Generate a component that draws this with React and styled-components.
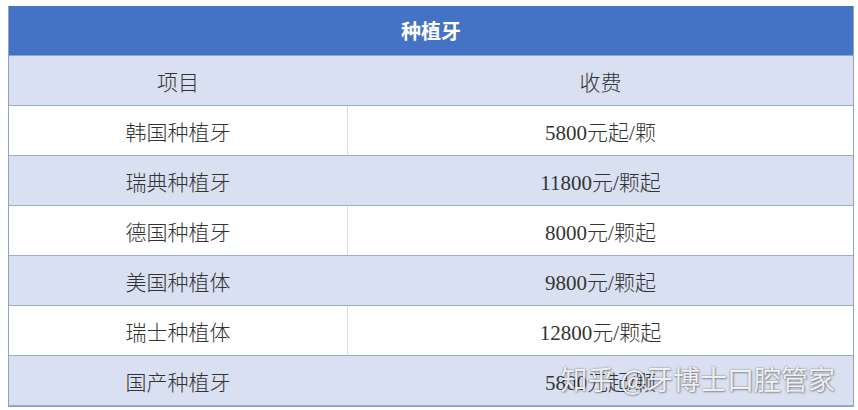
import React from "react";
import styled, { createGlobalStyle } from "styled-components";

const GlobalStyle = createGlobalStyle`
  html, body {
    margin: 0;
    padding: 0;
    background: #ffffff;
  }
`;

const rows = [
  { name: "韩国种植牙", price: "5800元起/颗" },
  { name: "瑞典种植牙", price: "11800元/颗起" },
  { name: "德国种植牙", price: "8000元/颗起" },
  { name: "美国种植体", price: "9800元/颗起" },
  { name: "瑞士种植体", price: "12800元/颗起" },
  { name: "国产种植牙", price: "5800元起/颗" },
];

const App = () => {
  return (
    <Page>
      <GlobalStyle />
      <Table>
        <Title>种植牙</Title>
        <Row $shade>
          <Cell $left $shade>项目</Cell>
          <Cell $shade>收费</Cell>
        </Row>
        {rows.map((r, i) => (
          <Row key={r.name} $shade={i % 2 === 1}>
            <Cell $left $shade={i % 2 === 1}>{r.name}</Cell>
            <Cell $shade={i % 2 === 1}>{r.price}</Cell>
          </Row>
        ))}
        <Watermark>知乎 @牙博士口腔管家</Watermark>
      </Table>
    </Page>
  );
};

export default App;

const Page = styled.div`
  width: 858px;
  height: 410px;
  padding: 6px 0 0 8px;
  box-sizing: border-box;
`;

const Table = styled.div`
  position: relative;
  width: 846px;
  border: 1px solid #8fa2c9;
  border-top: none;
  box-sizing: border-box;
  font-family: "Liberation Serif", "Noto Sans CJK SC", serif;
`;

const Title = styled.div`
  height: 50px;
  background: #4472c4;
  color: #ffffff;
  font-weight: bold;
  font-size: 20px;
  display: flex;
  align-items: center;
  justify-content: center;
  border-bottom: 1px solid #8ea5d4;
  box-sizing: border-box;
`;

const Row = styled.div`
  display: grid;
  grid-template-columns: 339px 1fr;
  height: 50px;
  background: ${(p) => (p.$shade ? "#d9e0f1" : "#ffffff")};
  border-bottom: 1px solid #9aabcf;
  box-sizing: border-box;
  &:last-of-type {
    border-bottom: none;
  }
`;

const Cell = styled.div`
  display: flex;
  align-items: center;
  justify-content: center;
  font-size: 21px;
  font-weight: 300;
  color: #333333;
  border-right: ${(p) =>
    p.$left ? (p.$shade ? "1px solid #d9e0f1" : "1px solid #dcdcdc") : "none"};
`;

const Watermark = styled.div`
  position: absolute;
  right: 18px;
  bottom: 8px;
  font-family: "Noto Sans CJK SC", sans-serif;
  font-size: 27px;
  color: rgba(255, 255, 255, 0.9);
  text-shadow: 0 0 2px rgba(60, 60, 60, 0.6), 1px 1px 2px rgba(0, 0, 0, 0.3);
`;
